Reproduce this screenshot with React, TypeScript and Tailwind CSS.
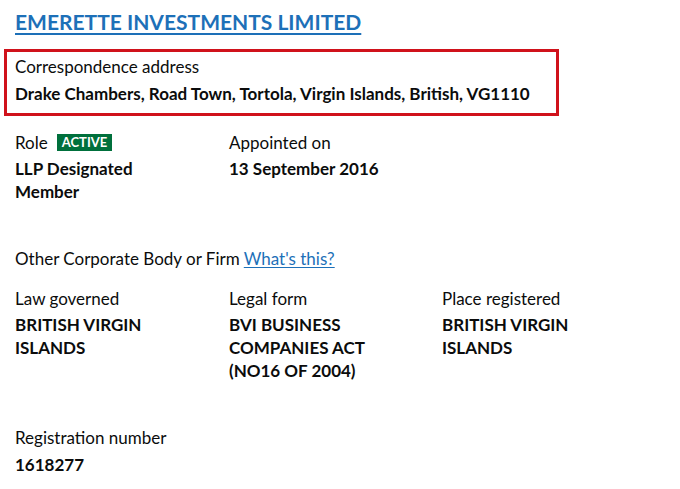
export default function App() {
  return (
    <div className="min-h-screen bg-white px-[15px] pt-[7px] font-['Lato','Noto_Sans',sans-serif] text-[17px] text-[#0b0c0c]">
      {/* Officer name */}
      <h2 className="text-[21px] font-bold leading-[30px]">
        <a href="#" className="text-[#1d70b8] underline decoration-[2px] underline-offset-[3px]">
          EMERETTE INVESTMENTS LIMITED
        </a>
      </h2>

      {/* Address, highlighted */}
      <div className="-ml-[11px] mt-[12px] w-[555px] border-[3px] border-[#d0121b] px-[8px] pt-[3px] pb-[8px]">
        <div className="leading-[23px]">Correspondence address</div>
        <div className="mt-[4px] font-bold leading-[23px]">
          Drake Chambers, Road Town, Tortola, Virgin Islands, British, VG1110
        </div>
      </div>

      {/* Role + appointed */}
      <div className="mt-[15px] grid grid-cols-[214px_214px]">
        <div>
          <div className="flex items-center gap-[9px] leading-[23px]">
            Role
            <span className="bg-[#00703c] px-[5px] text-[13px] font-bold leading-[17px] text-white">ACTIVE</span>
          </div>
          <div className="mt-[3px] w-[150px] font-bold leading-[23px]">LLP Designated Member</div>
        </div>
        <div>
          <div className="leading-[23px]">Appointed on</div>
          <div className="mt-[3px] font-bold leading-[23px]">13 September 2016</div>
        </div>
      </div>

      <div className="mt-[44px] leading-[23px]">
        Other Corporate Body or Firm{' '}
        <a href="#" className="text-[#1d70b8] underline underline-offset-[2px]">
          What's this?
        </a>
      </div>

      <div className="mt-[17px] grid grid-cols-[214px_213px_214px]">
        <div>
          <div className="leading-[23px]">Law governed</div>
          <div className="mt-[3px] w-[140px] font-bold leading-[23px]">BRITISH VIRGIN ISLANDS</div>
        </div>
        <div>
          <div className="leading-[23px]">Legal form</div>
          <div className="mt-[3px] w-[150px] font-bold leading-[23px]">BVI BUSINESS COMPANIES ACT (NO16 OF 2004)</div>
        </div>
        <div>
          <div className="leading-[23px]">Place registered</div>
          <div className="mt-[3px] w-[140px] font-bold leading-[23px]">BRITISH VIRGIN ISLANDS</div>
        </div>
      </div>

      <div className="mt-[44px]">
        <div className="leading-[23px]">Registration number</div>
        <div className="mt-[4px] font-bold leading-[23px]">1618277</div>
      </div>
    </div>
  );
}
